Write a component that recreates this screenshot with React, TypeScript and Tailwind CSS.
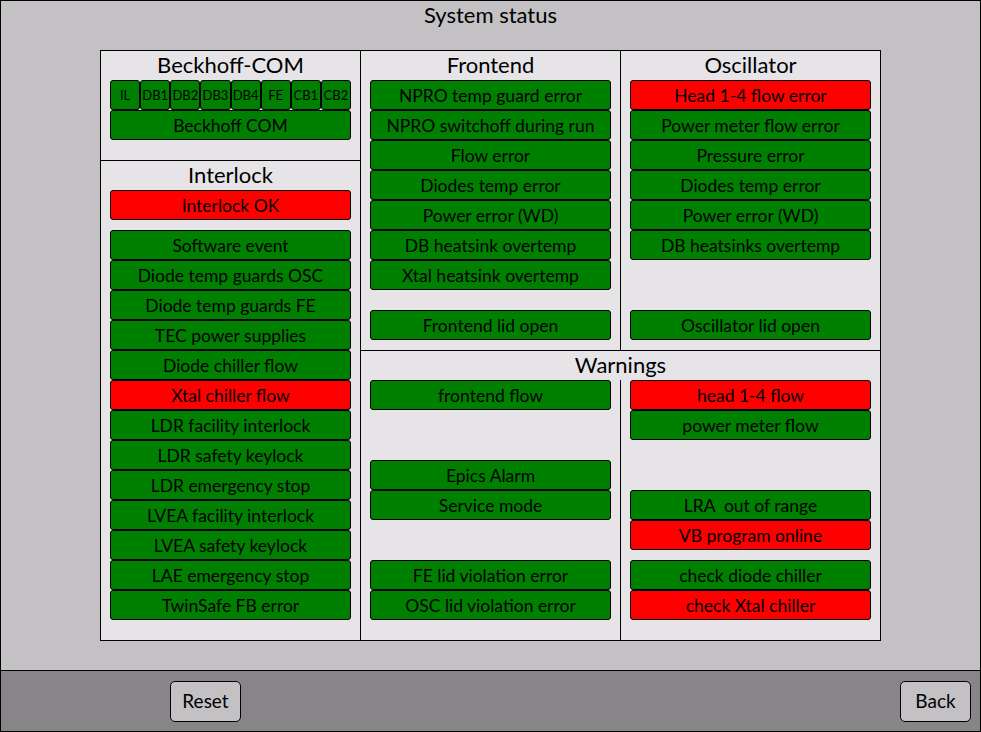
import React from "react";

type Item = { label: string; bad?: boolean; gap?: number };

const font = { fontFamily: "Lato, 'Open Sans', sans-serif" };

function Led({ label, bad, small }: { label: string; bad?: boolean; small?: boolean }) {
  return (
    <div
      className={
        "flex items-center justify-center border border-black rounded-[3px] text-black whitespace-pre overflow-hidden pt-[2px] " +
        (small ? "h-[30px] flex-1 text-[13px]" : "h-[30px] text-[17.5px]") +
        (bad ? " bg-[#ff0000]" : " bg-[#008000]")
      }
    >
      {label}
    </div>
  );
}

function Stack({ items }: { items: Item[] }) {
  return (
    <div className="flex flex-col px-[9px]">
      {items.map((it) => (
        <div key={it.label} style={it.gap ? { marginTop: it.gap } : undefined}>
          <Led label={it.label} bad={it.bad} />
        </div>
      ))}
    </div>
  );
}

function Title({ text }: { text: string }) {
  return <div className="h-[29px] flex items-center justify-center text-[22px] text-black leading-none pb-[1px]">{text}</div>;
}

const interlock: Item[] = [
  { label: "Interlock OK", bad: true },
  { label: "Software event", gap: 10 },
  { label: "Diode temp guards OSC" },
  { label: "Diode temp guards FE" },
  { label: "TEC power supplies" },
  { label: "Diode chiller flow" },
  { label: "Xtal chiller flow", bad: true },
  { label: "LDR facility interlock" },
  { label: "LDR safety keylock" },
  { label: "LDR emergency stop" },
  { label: "LVEA facility interlock" },
  { label: "LVEA safety keylock" },
  { label: "LAE emergency stop" },
  { label: "TwinSafe FB error" },
];

const frontend: Item[] = [
  { label: "NPRO temp guard error" },
  { label: "NPRO switchoff during run" },
  { label: "Flow error" },
  { label: "Diodes temp error" },
  { label: "Power error (WD)" },
  { label: "DB heatsink overtemp" },
  { label: "Xtal heatsink overtemp" },
  { label: "Frontend lid open", gap: 20 },
];

const oscillator: Item[] = [
  { label: "Head 1-4 flow error", bad: true },
  { label: "Power meter flow error" },
  { label: "Pressure error" },
  { label: "Diodes temp error" },
  { label: "Power error (WD)" },
  { label: "DB heatsinks overtemp" },
  { label: "Oscillator lid open", gap: 50 },
];

const warnLeft: Item[] = [
  { label: "frontend flow" },
  { label: "Epics Alarm", gap: 50 },
  { label: "Service mode" },
  { label: "FE lid violation error", gap: 40 },
  { label: "OSC lid violation error" },
];

const warnRight: Item[] = [
  { label: "head 1-4 flow", bad: true },
  { label: "power meter flow" },
  { label: "LRA  out of range", gap: 50 },
  { label: "VB program online", bad: true },
  { label: "check diode chiller", gap: 10 },
  { label: "check Xtal chiller", bad: true },
];

const beckhoff = ["IL", "DB1", "DB2", "DB3", "DB4", "FE", "CB1", "CB2"];

export default function App() {
  return (
    <div style={font} className="w-[981px] h-[732px] border border-black bg-[#c3c1c3] flex flex-col overflow-hidden">
      <div className="h-[669px] flex flex-col">
        <div className="h-[49px] flex justify-center">
          <span className="text-[22px] leading-[28px] text-black">System status</span>
        </div>
        <div className="ml-[99px] w-[781px] h-[591px] border border-black bg-[#e6e4e7] flex">
          <div className="w-[260px] border-r border-black flex flex-col">
            <div className="h-[110px] border-b border-black">
              <Title text="Beckhoff-COM" />
              <div className="px-[9px]">
                <div className="flex">
                  {beckhoff.map((b) => (
                    <Led key={b} label={b} small />
                  ))}
                </div>
                <Led label="Beckhoff COM" />
              </div>
            </div>
            <div className="flex-1">
              <Title text="Interlock" />
              <Stack items={interlock} />
            </div>
          </div>
          <div className="w-[519px] flex flex-col">
            <div className="h-[300px] border-b border-black flex">
              <div className="w-[260px] border-r border-black">
                <Title text="Frontend" />
                <Stack items={frontend} />
              </div>
              <div className="w-[259px]">
                <Title text="Oscillator" />
                <Stack items={oscillator} />
              </div>
            </div>
            <div className="flex-1 flex flex-col">
              <Title text="Warnings" />
              <div className="flex flex-1">
                <div className="w-[260px] border-r border-black">
                  <Stack items={warnLeft} />
                </div>
                <div className="w-[259px]">
                  <Stack items={warnRight} />
                </div>
              </div>
            </div>
          </div>
        </div>
      </div>
      <div className="flex-1 border-t border-black bg-[#878587] flex items-center justify-between pl-[169px] pr-[9px]">
        <button className="w-[71px] h-[41px] border border-black rounded-[5px] bg-[#c3c1c3] text-[19px] text-black pt-[1px]">Reset</button>
        <button className="w-[71px] h-[41px] border border-black rounded-[5px] bg-[#c3c1c3] text-[19px] text-black pt-[1px]">Back</button>
      </div>
    </div>
  );
}
